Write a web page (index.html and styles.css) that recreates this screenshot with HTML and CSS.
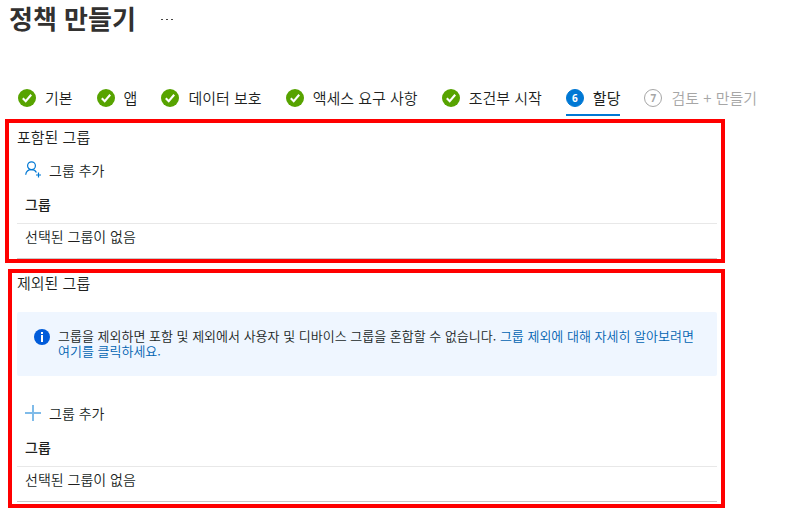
FILE: index.html
```html
<!DOCTYPE html>
<html lang="ko">
<head>
<meta charset="utf-8">
<meta name="viewport" content="width=device-width, initial-scale=1">
<title>정책 만들기</title>
<link rel="stylesheet" href="styles.css">
</head>
<body>
<svg class="sprite" aria-hidden="true">
  <symbol id="check" viewBox="0 0 18 18">
    <circle cx="9" cy="9" r="9" fill="#57a300"/>
    <path d="M4.8 9.3 7.7 12.2 13.2 5.8" fill="none" stroke="#fff" stroke-width="2.1"/>
  </symbol>
</svg>
<header class="page-header">
  <h1>정책 만들기</h1>
  <button class="more" type="button" aria-label="더 보기">
    <svg width="12" height="4" viewBox="0 0 12 4"><path d="M0 1h2v1H0zM5 1h2v1H5zM10 1h2v1h-2z" fill="#484644"/></svg>
  </button>
</header>
<nav>
  <ol class="steps">
    <li><a class="step" href="#basics"><svg class="step-icon"><use href="#check"/></svg><span class="label">기본</span></a></li>
    <li><a class="step" href="#apps"><svg class="step-icon"><use href="#check"/></svg><span class="label">앱</span></a></li>
    <li><a class="step" href="#data"><svg class="step-icon"><use href="#check"/></svg><span class="label">데이터 보호</span></a></li>
    <li><a class="step" href="#access"><svg class="step-icon"><use href="#check"/></svg><span class="label">액세스 요구 사항</span></a></li>
    <li><a class="step" href="#launch"><svg class="step-icon"><use href="#check"/></svg><span class="label">조건부 시작</span></a></li>
    <li><a class="step current" href="#assign" aria-current="step"><span class="step-icon number">6</span><span class="label">할당</span></a></li>
    <li><a class="step upcoming" href="#review"><span class="step-icon number">7</span><span class="label">검토 + 만들기</span></a></li>
  </ol>
</nav>
<main>
  <section class="panel included">
    <h2>포함된 그룹</h2>
    <button class="add" type="button">
      <svg width="17" height="17" viewBox="0 0 17 17" fill="none" stroke="#0078d4" stroke-width="1.2">
        <circle cx="6.500" cy="4.700" r="3.900"/>
        <path d="M.7 13.700C1 10.600 3.200 8.600 6.500 8.600c2.300 0 4 1 4.900 2.800"/>
        <path d="M13.500 11.500v5M11 14h5"/>
      </svg>
      그룹 추가
    </button>
    <table>
      <thead><tr><th scope="col">그룹</th></tr></thead>
      <tbody><tr><td>선택된 그룹이 없음</td></tr></tbody>
    </table>
  </section>
  <section class="panel excluded">
    <h2>제외된 그룹</h2>
    <div class="notice">
      <svg width="16" height="16" viewBox="0 0 16 16">
        <circle cx="8" cy="8" r="8" fill="#015cda"/>
        <path d="M7 3h2v2H7zM7 6h2v7H7z" fill="#fff"/>
      </svg>
      <p>그룹을 제외하면 포함 및 제외에서 사용자 및 디바이스 그룹을 혼합할 수 없습니다. <a href="#learn">그룹 제외에 대해 자세히 알아보려면 여기를 클릭하세요.</a></p>
    </div>
    <button class="add" type="button">
      <svg width="17" height="17" viewBox="0 0 17 17"><path d="M7 1h2v16H7zM0 8h16v2H0z" fill="#0078d4" fill-opacity=".5"/></svg>
      그룹 추가
    </button>
    <table>
      <thead><tr><th scope="col">그룹</th></tr></thead>
      <tbody><tr><td>선택된 그룹이 없음</td></tr></tbody>
    </table>
  </section>
</main>
</body>
</html>
```
FILE: styles.css
```css
* {
  box-sizing: border-box;
}

body {
  margin: 0;
  background: #fff;
  color: #201f1e;
  font-family: "Noto Sans CJK KR", sans-serif;
  font-size: 14px;
  font-weight: 350;
}

h1, h2, p, ol {
  margin: 0;
  padding: 0;
}

button {
  border: 0;
  padding: 0;
  background: none;
  color: inherit;
  font: inherit;
  cursor: pointer;
}

a {
  text-decoration: none;
}

.sprite {
  display: none;
}

.page-header {
  display: flex;
  align-items: flex-start;
  gap: 25px;
  padding-left: 9px;
  height: 80px;
}

h1 {
  color: #323130;
  font-size: 26px;
  font-weight: 700;
  line-height: 36px;
}

.more {
  display: flex;
  align-items: center;
  height: 40px;
}

.steps {
  display: flex;
  gap: 24px;
  padding-left: 18px;
  list-style: none;
}

.step {
  display: flex;
  align-items: center;
  gap: 9px;
  height: 36px;
  color: #201f1e;
  font-size: 15px;
  white-space: nowrap;
}

.label {
  padding-bottom: 2px;
}

.step-icon {
  width: 18px;
  height: 18px;
}

.number {
  display: flex;
  align-items: center;
  justify-content: center;
  border: 1px solid currentColor;
  border-radius: 50%;
  font-family: "Open Sans", sans-serif;
  font-size: 10px;
  font-weight: 700;
  line-height: 16px;
}

.current {
  box-shadow: inset 0 -2px #0078d4;
  font-weight: 400;
}

.current .number {
  border-color: #0078d4;
  background: #0078d4;
  color: #fff;
}

.upcoming {
  color: #a6a6a6;
}

.panel {
  border: 4px solid #f00;
}

.included {
  margin: 3px 61px 6px 5px;
  padding: 4px 4px 0 8px;
}

.excluded {
  margin: 0 61px 18px 8px;
  padding: 0 4px 2px 5px;
}

h2 {
  font-size: 15px;
  font-weight: 350;
  line-height: 20px;
}

.included h2 {
  margin-bottom: 6px;
}

.add {
  display: flex;
  align-items: center;
  gap: 7px;
  height: 35px;
  padding: 0 0 2px 8px;
}

.notice {
  display: flex;
  gap: 8px;
  margin: 19px 0 20px;
  padding: 16px 16px 18px 17px;
  border-radius: 2px;
  background: #eff6ff;
  font-size: 13px;
  line-height: 15px;
  word-break: keep-all;
}

.notice svg {
  flex: none;
  margin-top: 1px;
}

.notice a {
  color: #0063b1;
}

table {
  width: 100%;
  border-spacing: 0;
}

th, td {
  text-align: left;
  line-height: 20px;
}

th {
  height: 36px;
  padding: 0 8px 3px;
  border-bottom: 1px solid #e8e8e8;
  font-weight: 500;
}

td {
  height: 35px;
  padding: 2px 8px 12px;
  border-bottom: 1px solid #c8c8c8;
}
```
